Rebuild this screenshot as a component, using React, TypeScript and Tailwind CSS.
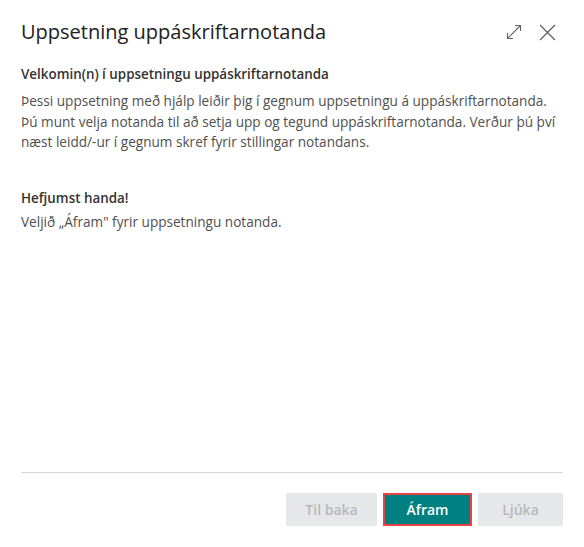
export default function App() {
  return (
    <div className="h-[547px] w-[584px] bg-white flex flex-col font-['Segoe_UI','Open_Sans',sans-serif] text-[#505050]">
      {/* header */}
      <div className="flex items-center justify-between pl-[21px] pr-[28px] pt-[18px]">
        <h1 className="text-[20px] leading-[28px] text-[#212121]">Uppsetning uppáskriftarnotanda</h1>
        <div className="flex items-center gap-[17px] text-[#616161]">
          <svg width="16" height="16" viewBox="0 0 16 16" fill="none" stroke="currentColor" strokeWidth="1.1">
            <path d="M1.5 14.5 L14.5 1.5" />
            <path d="M9 1.5 H14.5 V7" />
            <path d="M1.5 9 V14.5 H7" />
          </svg>
          <svg width="17" height="17" viewBox="0 0 16 16" fill="none" stroke="currentColor" strokeWidth="1.2">
            <path d="M1 1 L15 15 M15 1 L1 15" />
          </svg>
        </div>
      </div>

      {/* body */}
      <div className="flex-1 pl-[21px] pr-[12px] pt-[18px]">
        <h2 className="text-[13.4px] leading-[20px] font-semibold text-[#333]">Velkomin(n) í uppsetningu uppáskriftarnotanda</h2>
        <p className="mt-[7px] text-[13.6px] leading-[20.5px]">
          Þessi uppsetning með hjálp leiðir þig í gegnum uppsetningu á uppáskriftarnotanda.
          <br />
          Þú munt velja notanda til að setja upp og tegund uppáskriftarnotanda. Verður þú því
          <br />
          næst leidd/-ur í gegnum skref fyrir stillingar notandans.
        </p>
        <h2 className="mt-[35px] text-[13.4px] leading-[20px] font-semibold text-[#333]">Hefjumst handa!</h2>
        <p className="mt-[4px] text-[13.6px] leading-[20px]">Veljið „Áfram" fyrir uppsetningu notanda.</p>
      </div>

      {/* footer */}
      <div className="px-[21px] pb-[21px]">
        <div className="h-px bg-[#d6d6d6]" />
        <div className="mt-[20px] flex justify-end gap-[6px]">
          <button className="h-[33px] w-[91px] rounded-[2px] bg-[#e6e7e8] text-[14px] font-semibold text-[#b4b8bc]">Til baka</button>
          <button className="h-[33px] w-[89px] border-2 border-[#e84343] bg-[#008080] text-[14px] font-semibold text-white">Áfram</button>
          <button className="h-[33px] w-[85px] rounded-[2px] bg-[#e6e7e8] text-[14px] font-semibold text-[#b4b8bc]">Ljúka</button>
        </div>
      </div>
    </div>
  );
}
